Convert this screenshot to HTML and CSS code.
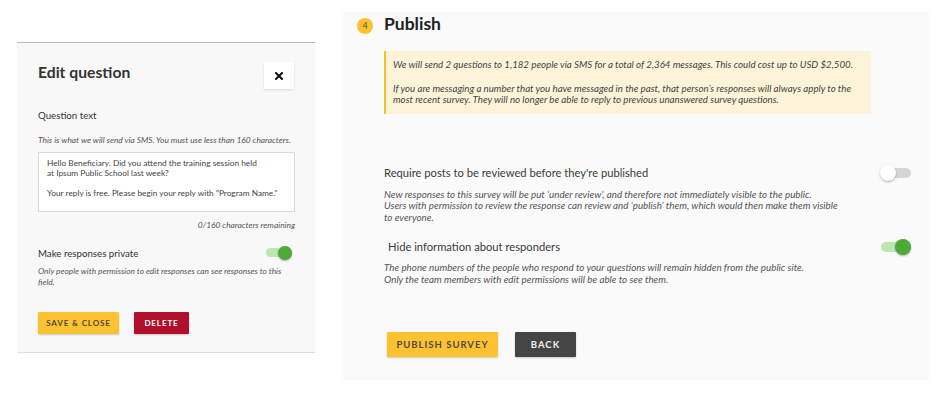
FILE: index.html
```html
<!DOCTYPE html>
<html lang="en">
<head>
<meta charset="utf-8">
<title>Edit question / Publish</title>
<link rel="stylesheet" href="styles.css">
</head>
<body>
<div class="page">
  <section class="edit">
    <div class="edit-head">
      <h2 class="edit-title">Edit question</h2>
      <button class="close" aria-label="Close">
        <svg width="8" height="8" viewBox="0 0 8 8"><path d="M1 1L7 7M7 1L1 7" stroke="#111" stroke-width="2" stroke-linecap="square"/></svg>
      </button>
    </div>
    <div class="label q-label">Question text</div>
    <div class="hint hint-sms">This is what we will send via SMS. You must use less than 160 characters.</div>
    <div class="textbox">Hello Beneficiary. Did you attend the training session held<br>at Ipsum Public School last week?<br><br>Your reply is free. Please begin your reply with “Program Name.”</div>
    <div class="counter">0/160 characters remaining</div>
    <div class="row private-row">
      <span class="label">Make responses private</span>
      <span class="toggle small on"></span>
    </div>
    <div class="hint hint-private">Only people with permission to edit responses can see responses to this<br>field.</div>
    <div class="actions">
      <button class="btn btn-yellow btn-save">SAVE &amp; CLOSE</button>
      <button class="btn btn-red btn-delete">DELETE</button>
    </div>
  </section>

  <section class="publish">
    <div class="pub-head">
      <span class="step">4</span>
      <h2 class="pub-title">Publish</h2>
    </div>
    <div class="note">
      <p class="note-1">We will send 2 questions to 1,182 people via SMS for a total of 2,364 messages. This could cost up to USD $2,500.</p>
      <p class="note-2">If you are messaging a number that you have messaged in the past, that person’s responses will always apply to the<br>most recent survey. They will no longer be able to reply to previous unanswered survey questions.</p>
    </div>
    <div class="row opt-row review-row">
      <span class="opt-label">Require posts to be reviewed before they're published</span>
      <span class="toggle"></span>
    </div>
    <div class="desc desc-review">New responses to this survey will be put ‘under review’, and therefore not immediately visible to the public.<br>Users with permission to review the response can review and ‘publish’ them, which would then make them visible<br>to everyone.</div>
    <div class="row opt-row hide-row">
      <span class="opt-label hide-label">Hide information about responders</span>
      <span class="toggle on"></span>
    </div>
    <div class="desc desc-hide">The phone numbers of the people who respond to your questions will remain hidden from the public site.<br>Only the team members with edit permissions will be able to see them.</div>
    <div class="pub-actions">
      <button class="btn btn-yellow btn-publish">PUBLISH SURVEY</button>
      <button class="btn btn-dark btn-back">BACK</button>
    </div>
  </section>
</div>
</body>
</html>
```

FILE: styles.css
```css
* { box-sizing: border-box; }

body {
  margin: 0;
  background: #ffffff;
  font-family: Lato, "Noto Sans", "Liberation Sans", sans-serif;
  color: #333;
}

.page {
  display: flex;
  align-items: flex-start;
  padding-left: 17px;
}

/* ---------- Edit question panel ---------- */
.edit {
  width: 298px;
  margin-top: 42px;
  background: #f8f8f8;
  border-top: 1px solid #b9b9b9;
  border-bottom: 1px solid #dedede;
  padding: 19px 21px 18px 21px;
}

.edit-head {
  display: flex;
  justify-content: space-between;
  align-items: flex-start;
}

.edit-title {
  margin: 0;
  font-size: 15.7px;
  line-height: 20px;
  font-weight: 700;
  color: #333;
}

.close {
  width: 30px;
  height: 27px;
  padding: 0;
  border: 0;
  background: #fff;
  box-shadow: 0 1px 2px rgba(0,0,0,0.12);
  display: flex;
  align-items: center;
  justify-content: center;
}

.label {
  font-size: 9.7px;
  line-height: 14px;
  color: #333;
}

.q-label { margin-top: 19px; }

.hint {
  font-size: 8.4px;
  line-height: 10px;
  font-style: italic;
  color: #555;
  white-space: nowrap;
}

.hint-sms { margin-top: 13px; }

.textbox {
  margin-top: 7px;
  width: 257px;
  height: 60px;
  background: #fff;
  border: 1px solid #d9d9d9;
  padding: 5px 8px;
  font-size: 8.3px;
  line-height: 10px;
  color: #444;
  white-space: nowrap;
}

.counter {
  margin-top: 8px;
  text-align: right;
  font-size: 8.4px;
  line-height: 10px;
  font-style: italic;
  color: #555;
  margin-right: -1px;
}

.row {
  display: flex;
  justify-content: space-between;
  align-items: center;
}

.private-row {
  margin-top: 15.5px;
  height: 14px;
}

.hint-private {
  margin-top: 6px;
  line-height: 11px;
  font-size: 8.3px;
}

.actions {
  margin-top: 24.5px;
  display: flex;
  gap: 15px;
}

.btn {
  border: 0;
  padding: 0;
  font-family: Lato, "Noto Sans", "Liberation Sans", sans-serif;
  font-weight: 700;
  text-align: center;
  box-shadow: 0 1px 2px rgba(0,0,0,0.2);
  border-radius: 1px;
}

.btn-yellow { background: #fdc232; color: #4f4a3e; }
.btn-red { background: #b0102b; color: #fff; }
.btn-dark { background: #454545; color: #f0f0f0; }

.btn-save, .btn-delete {
  height: 22px;
  font-size: 8px;
  letter-spacing: 0.9px;
}
.btn-save { width: 81px; }
.btn-delete { width: 55px; }

/* ---------- Toggles ---------- */
.toggle {
  position: relative;
  width: 31px;
  height: 16px;
  flex: none;
}
.toggle::before {
  content: "";
  position: absolute;
  left: 1px;
  right: 0;
  top: 3px;
  height: 10px;
  border-radius: 5px;
  background: #d6d6d6;
}
.toggle::after {
  content: "";
  position: absolute;
  left: 0;
  top: 0;
  width: 16px;
  height: 16px;
  border-radius: 50%;
  background: #fff;
  box-shadow: 0 1px 2px rgba(0,0,0,0.3);
}
.toggle.on::before { background: #bde6b3; }
.toggle.on::after {
  left: auto;
  right: 0;
  background: #4caa35;
}

.toggle.small {
  width: 27px;
  height: 14px;
  margin-right: 2px;
}
.toggle.small::before { top: 2.5px; height: 9px; }
.toggle.small::after { width: 14px; height: 14px; }

/* ---------- Publish panel ---------- */
.publish {
  margin-left: 28px;
  margin-top: 12px;
  width: 586px;
  height: 368px;
  background: #fafafa;
  padding: 1px 18px 0 41px;
}

.pub-head {
  display: flex;
  align-items: flex-start;
  gap: 11px;
  margin-left: -27px;
}

.step {
  margin-top: 5px;
  width: 16px;
  height: 16px;
  border-radius: 50%;
  background: #fcc12f;
  color: #555;
  font-size: 9px;
  line-height: 16px;
  text-align: center;
}

.pub-title {
  margin: 0;
  font-size: 17.5px;
  line-height: 22px;
  font-weight: 700;
  color: #222;
}

.note {
  margin-top: 16px;
  width: 487px;
  background: #fdf3d9;
  border-left: 2px solid #f6be2c;
  padding: 8px 8px 8px 7px;
  font-size: 9.7px;
  line-height: 11.5px;
  font-style: italic;
  color: #444;
  white-space: nowrap;
}
.note p { margin: 0; }
.note .note-2 { margin-top: 12px; }

.opt-row { height: 16px; }
.review-row { margin-top: 51px; }
.hide-row { margin-top: 16px; }

.opt-label {
  font-size: 11.2px;
  line-height: 16px;
  color: #3a3a3a;
}
.hide-label { margin-left: 4px; }

.desc {
  font-size: 9.8px;
  line-height: 11.5px;
  font-style: italic;
  color: #555;
  white-space: nowrap;
}
.desc-review { margin-top: 8px; }
.desc-hide { margin-top: 7.25px; }

.pub-actions {
  margin-top: 46.75px;
  margin-left: 3px;
  display: flex;
  gap: 17px;
}

.btn-publish, .btn-back {
  height: 25px;
  font-size: 9.5px;
  letter-spacing: 1px;
}
.btn-publish { width: 111px; }
.btn-back { width: 61px; }
```
